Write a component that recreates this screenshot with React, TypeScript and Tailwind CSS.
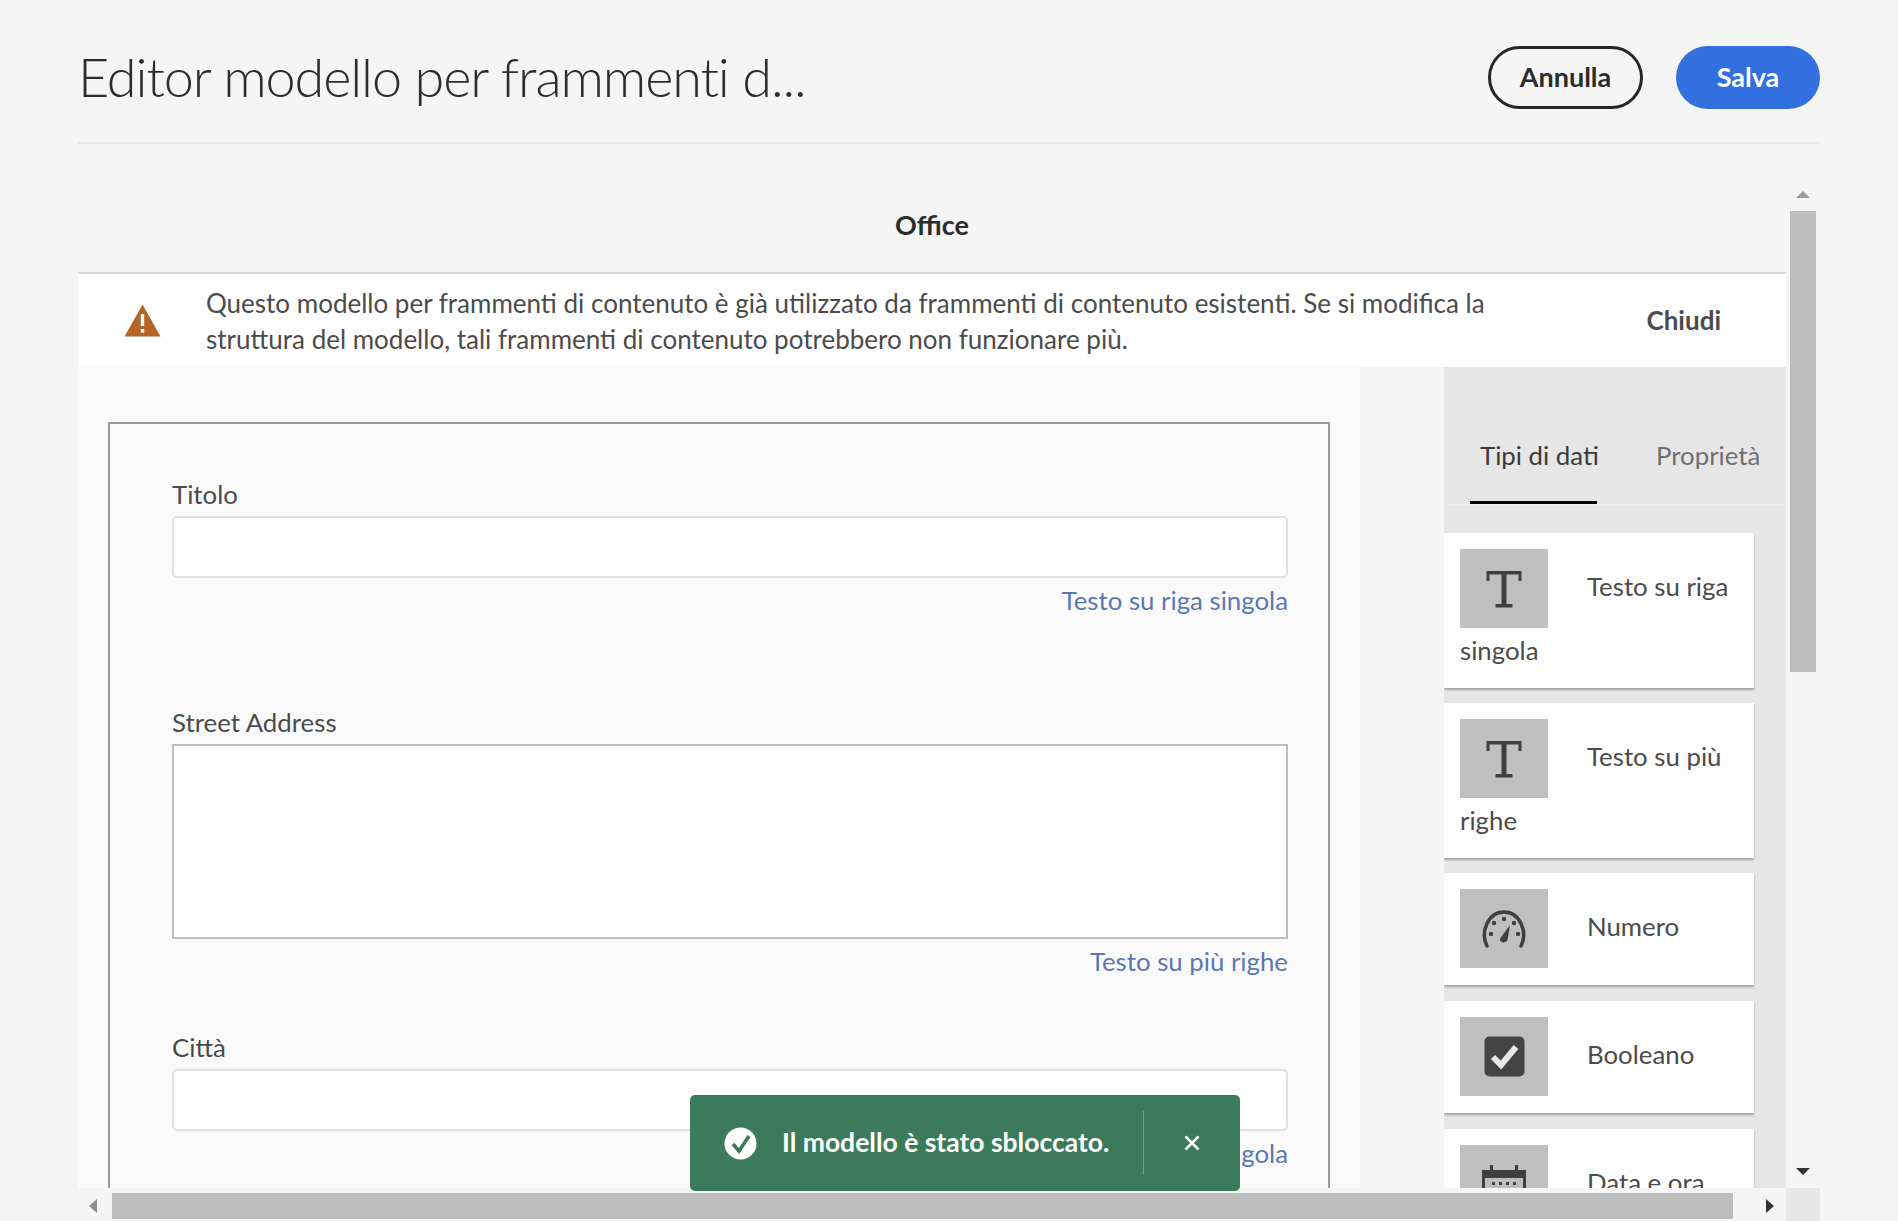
import React from 'react'

const font = 'font-["Lato","Open_Sans",sans-serif]'

const SerifT = () => (
  <svg width="36" height="38" viewBox="0 0 36 38" fill="#3f3f3f">
    <path d="M0.500 1h35v10h-3v-6.500H20.500v29.500H26.500v3.500H9.500v-3.500H15.500V4.500H3.500V11h-3z" />
  </svg>
)

const Gauge = () => (
  <svg width="46" height="38" viewBox="0 0 46 38" fill="none">
    <path d="M6 36 C-1 22 7 2 23 2 C39 2 47 22 40 36" stroke="#3f3f3f" strokeWidth="3.500" strokeLinecap="round" />
    <circle cx="10" cy="24" r="2.200" fill="#3f3f3f" />
    <circle cx="13" cy="13" r="2.200" fill="#3f3f3f" />
    <circle cx="23" cy="9" r="2.200" fill="#3f3f3f" />
    <circle cx="33" cy="13" r="2.200" fill="#3f3f3f" />
    <circle cx="37" cy="24" r="2.200" fill="#3f3f3f" />
    <path d="M29 15 L26.500 30 C25 33.500 19.500 33 19 30 C19 28 20 27 21 26z" fill="#3f3f3f" />
  </svg>
)

const CheckBox = () => (
  <svg width="41" height="41" viewBox="0 0 41 41">
    <rect x="0.500" y="0.500" width="40" height="40" rx="5" fill="#444" />
    <path d="M9 21 L17 29 L32 11" fill="none" stroke="#e8e8e8" strokeWidth="6" />
  </svg>
)

const Calendar = () => (
  <svg className="mt-[7px]" width="46" height="46" viewBox="0 0 46 46" fill="#3f3f3f">
    <path d="M1 5h44v36H1zM4 13v25h38V13z" fillRule="evenodd" />
    <rect x="9" y="0" width="3" height="9" />
    <rect x="34" y="0" width="3" height="9" />
    <rect x="11" y="17" width="3" height="3" />
    <rect x="18" y="17" width="3" height="3" />
    <rect x="25" y="17" width="3" height="3" />
    <rect x="32" y="17" width="3" height="3" />
    <rect x="11" y="23" width="3" height="3" />
    <rect x="18" y="23" width="3" height="3" />
    <rect x="25" y="23" width="3" height="3" />
    <rect x="32" y="23" width="3" height="3" />
  </svg>
)

const WarningIcon = () => (
  <svg width="37" height="33" viewBox="0 0 37 33">
    <path d="M18.500 0.500 L36.500 32.500 H0.500z" fill="#b5652a" />
    <rect x="16.800" y="10" width="3.400" height="12" fill="#fff" />
    <rect x="16.800" y="25" width="3.400" height="3.600" fill="#fff" />
  </svg>
)

const Field: React.FC<{ label: string; link: string; tall?: boolean; className?: string }> = ({ label, link, tall, className }) => (
  <div className={className}>
    <div className="h-[30px] text-[25.800px] leading-[30px] text-[#4b4b4b]">{label}</div>
    {tall ? (
      <div className="mt-[7px] h-[195px] border-2 border-[#bdbdbd] bg-white"></div>
    ) : (
      <div className="mt-[7px] h-[62px] rounded-[5px] border-2 border-[#e1e1e1] bg-white"></div>
    )}
    <div className="mt-[7px] h-[30px] text-right text-[25.800px] leading-[30px] text-[#5a78b4]">{link}</div>
  </div>
)

const TypeCard: React.FC<{ icon: React.ReactNode; text: string; rest?: string; className?: string }> = ({ icon, text, rest, className }) => (
  <div className={`w-[310px] bg-[#fdfdfd] px-4 pb-[17px] pt-4 shadow-[0_2px_2px_rgba(0,0,0,0.3)] ${className}`}>
    <div className="flex items-center">
      <div className="flex h-[79px] w-[88px] shrink-0 items-center justify-center overflow-hidden bg-[#bfbfbf]">{icon}</div>
      <div className="ml-[39px] mb-[6px] text-[25.800px] leading-[30px] text-[#4b4b4b]">{text}</div>
    </div>
    {rest && <div className="mb-[6px] mt-[7px] text-[25.800px] leading-[30px] text-[#4b4b4b]">{rest}</div>}
  </div>
)

export default function App() {
  return (
    <div className={`relative flex h-screen w-full flex-col overflow-hidden bg-[#f5f5f5] pl-[78px] pr-[78px] ${font}`}>
      <header className="flex h-[144px] shrink-0 items-center justify-between border-b-2 border-[#e8e8e8] pt-[12px]">
        <h1 className="text-[54px] font-light leading-none tracking-[-1.100px] text-[#2c2c2c]">Editor modello per frammenti d...</h1>
        <div className="flex gap-[33px]">
          <button className="h-[63px] w-[155px] rounded-full border-[3px] border-[#262626] text-[27px] font-bold text-[#2c2c2c]">Annulla</button>
          <button className="h-[63px] w-[144px] rounded-full bg-[#326fdf] text-[27px] font-bold text-white">Salva</button>
        </div>
      </header>

      <div className="mt-[37px] flex min-h-0 flex-1 flex-col">
        <div className="flex min-h-0 flex-1">
          <main className="flex min-w-0 flex-1 flex-col overflow-hidden">
            <div className="flex h-[93px] shrink-0 items-center justify-center border-b-2 border-[#d5d5d5] pb-[2px] text-[27px] font-bold text-[#2c2c2c]">Office</div>

            <div className="flex h-[93px] shrink-0 items-center bg-white pl-[46px] pr-[65px]">
              <WarningIcon />
              <p className="ml-[45px] w-[1290px] text-[26px] leading-[36px] text-[#4b4b4b]">
                Questo modello per frammenti di contenuto è già utilizzato da frammenti di contenuto esistenti. Se si modifica la struttura del modello, tali frammenti di contenuto potrebbero non funzionare più.
              </p>
              <button className="ml-auto text-[26px] font-bold text-[#4b4b4b]">Chiudi</button>
            </div>

            <div className="flex min-h-0 flex-1">
              <div className="min-h-0 w-[1282px] overflow-hidden bg-[#fafafa] pl-[30px] pt-[55px]">
                <div className="h-[800px] w-[1222px] border-2 border-b-0 border-[#9b9b9b] pl-[62px] pr-[40px] pt-[55px]">
                  <Field label="Titolo" link="Testo su riga singola" />
                  <Field label="Street Address" link="Testo su più righe" tall className="mt-[92px]" />
                  <Field label="Città" link="Testo su riga singola" className="mt-[56px]" />
                </div>
              </div>
              <div className="w-[84px] shrink-0"></div>
              <aside className="w-[342px] shrink-0 overflow-hidden bg-[#e6e6e6]">
                <div className="flex h-[138px] items-end whitespace-nowrap border-b border-[#ececec] pl-[26px] text-[25.800px] leading-[30px]">
                  <div className="w-[127px] border-b-[3px] border-black pb-[31px] pl-[10px] text-[#3a3a3a]">Tipi di dati</div>
                  <div className="ml-[59px] pb-[34px] text-[#6e6e6e]">Proprietà</div>
                </div>
                <div className="pt-[28px]">
                  <TypeCard icon={<SerifT />} text="Testo su riga" rest="singola" className="mb-[15px]" />
                  <TypeCard icon={<SerifT />} text="Testo su più" rest="righe" className="mb-[15px]" />
                  <TypeCard icon={<Gauge />} text="Numero" className="mb-[16px]" />
                  <TypeCard icon={<CheckBox />} text="Booleano" className="mb-[16px]" />
                  <TypeCard icon={<Calendar />} text="Data e ora" />
                </div>
              </aside>
            </div>
          </main>

          <div className="flex w-[34px] shrink-0 flex-col items-center bg-[#f5f5f5]">
            <div className="mt-[10px] h-0 w-0 border-x-[7px] border-b-[7px] border-x-transparent border-b-[#9a9a9a]"></div>
            <div className="mt-[13px] h-[461px] w-[26px] bg-[#bdbdbd]"></div>
            <div className="mt-auto mb-[13px] h-0 w-0 border-x-[7px] border-t-[7px] border-x-transparent border-t-[#333]"></div>
          </div>
        </div>

        <div className="flex h-[33px] shrink-0 items-start">
          <div className="ml-[11px] mt-[11px] h-0 w-0 border-y-[7px] border-r-[8px] border-y-transparent border-r-[#8f8f8f]"></div>
          <div className="ml-[15px] mt-[5px] h-[26px] w-[1621px] bg-[#bdbdbd]"></div>
          <div className="ml-[33px] mt-[11px] h-0 w-0 border-y-[7px] border-l-[8px] border-y-transparent border-l-[#333]"></div>
          <div className="ml-auto h-full w-[34px] bg-[#e6e6e6]"></div>
        </div>
      </div>

      <div className="absolute left-[690px] top-[1095px] flex h-[96px] w-[550px] items-center rounded-[5px] bg-[#3b7b5b] text-white">
        <svg className="ml-[34px]" width="33" height="33" viewBox="0 0 33 33">
          <circle cx="16.500" cy="16.500" r="16" fill="#fff" />
          <path d="M9 17 L15 24 L25 9" fill="none" stroke="#3b7b5b" strokeWidth="3.500" />
        </svg>
        <span className="ml-[25px] text-[26.500px] font-bold">Il modello è stato sbloccato.</span>
        <div className="absolute left-[453px] top-[16px] h-[64px] w-px bg-[#6f9f86]"></div>
        <svg className="absolute left-[494px] top-[40px]" width="16" height="16" viewBox="0 0 16 16">
          <path d="M1.500 1.500 L14.500 14.500 M14.500 1.500 L1.500 14.500" stroke="#fff" strokeWidth="2.500" />
        </svg>
      </div>
    </div>
  )
}
